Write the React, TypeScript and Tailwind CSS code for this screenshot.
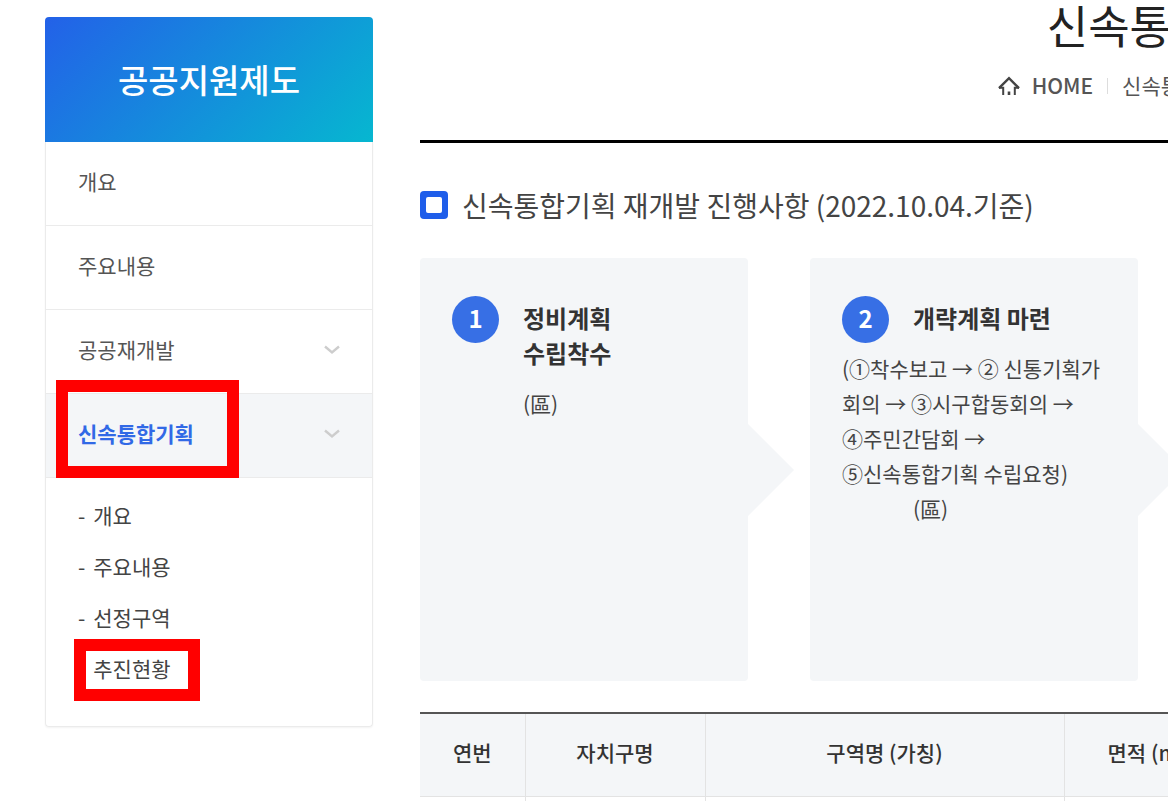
import { ReactNode } from 'react';
import clsx from 'clsx';

interface MenuItem {
  label: string;
  expandable?: boolean;
  active?: boolean;
}

const MENU: MenuItem[] = [
  { label: '개요' },
  { label: '주요내용' },
  { label: '공공재개발', expandable: true },
  { label: '신속통합기획', expandable: true, active: true },
];

const SUB_MENU = ['개요', '주요내용', '선정구역', '추진현황'];

const ChevronIcon = () => (
  <svg className="h-2.5 w-4" viewBox="0 0 16 10" fill="none" stroke="#cdcdcd" strokeWidth="2.4">
    <path d="M1 1.5 8 7.5 15 1.5" />
  </svg>
);

const HomeIcon = () => (
  <svg className="h-5 w-[22px]" viewBox="0 0 22 20" fill="none" stroke="#444" strokeWidth="2">
    <path d="M1 12.2 11 2.2 21 12.2" strokeWidth="2.4" />
    <path d="M1 11.8H5.2V19M21 11.8H16.8V19" />
    <path d="M11 15.5V19" strokeWidth="2.6" />
  </svg>
);

const Sidebar = () => (
  <aside className="mt-[17px] w-[328px] shrink-0">
    <h2 className="flex h-[125px] items-center justify-center rounded-t bg-linear-[135deg] from-[#2361e8] to-[#06b7d0] text-[33px] font-medium text-white">
      공공지원제도
    </h2>
    <nav className="rounded-b border border-t-0 border-[#ebebeb] shadow-xs">
      <ul>
        {MENU.map(({ label, expandable, active }) => (
          <li key={label} className={clsx('relative border-b border-[#ebebeb]', active && 'bg-[#f4f6f8]')}>
            <a
              href="#"
              className={clsx(
                'flex h-[83px] items-center justify-between pr-8 pb-1 pl-8',
                active ? 'font-bold text-[#3169e6]' : 'text-[#555]'
              )}
            >
              {label}
              {expandable && <ChevronIcon />}
            </a>
            {active && <span className="absolute -top-3.5 left-2.5 h-[98px] w-[183px] border-12 border-[#f00]" />}
          </li>
        ))}
      </ul>
      <ul className="pt-3 pb-8">
        {SUB_MENU.map((label, index) => (
          <li key={label} className="relative">
            <a href="#" className="flex h-[51px] items-center gap-2 pl-8 text-[#444]">
              <span>-</span>
              {label}
            </a>
            {index === SUB_MENU.length - 1 && (
              <span className="absolute -top-1 left-7 h-[62px] w-[126px] border-12 border-[#f00]" />
            )}
          </li>
        ))}
      </ul>
    </nav>
  </aside>
);

interface StepProps {
  no: number;
  title: ReactNode;
  children: ReactNode;
}

const Step = ({ no, title, children }: StepProps) => (
  <li className="flex items-center">
    <div className="h-[423px] w-[328px] rounded bg-[#f4f6f8] px-8 pt-[38px]">
      <div className="flex gap-6">
        <span className="flex size-[47px] shrink-0 items-center justify-center rounded-full bg-[#376fe5] pb-1 text-2xl font-bold text-white">
          {no}
        </span>
        <h4 className="pt-1 text-2xl/[35px] font-bold text-[#333]">{title}</h4>
      </div>
      {children}
    </div>
    <svg className="h-[92px] w-[46px]" viewBox="0 0 46 92" fill="#f4f6f8">
      <path d="M0 0 46 46 0 92Z" />
    </svg>
  </li>
);

const App = () => {
  return (
    <div className="flex h-screen gap-[47px] overflow-hidden bg-white pl-[45px] font-['Noto_Sans_CJK_KR',sans-serif] text-[21px]">
      <Sidebar />
      <main className="min-w-[1502px] flex-1">
        <header className="flex h-[143px] flex-col items-center border-b-3 border-black">
          <h1 className="text-[45px]/[50px] text-[#222]">신속통합기획</h1>
          <nav className="mt-5 flex items-center text-[#555]">
            <a href="#" className="flex items-center gap-3">
              <HomeIcon />
              <span className="font-medium">HOME</span>
            </a>
            <span className="mx-3.5 h-4 w-px bg-[#ddd]" />
            <a href="#">신속통합기획</a>
            <span className="mx-3.5 h-4 w-px bg-[#ddd]" />
            <a href="#">추진현황</a>
          </nav>
        </header>

        <h3 className="mt-10 flex items-center gap-3.5 text-[28px]/[44px] text-[#444]">
          <span className="flex size-7 items-center justify-center rounded bg-[#1f5eea]">
            <span className="size-4 rounded-xs bg-white" />
          </span>
          신속통합기획 재개발 진행사항 (2022.10.04.기준)
        </h3>

        <ol className="mt-[31px] flex gap-4">
          <Step
            no={1}
            title={
              <>
                정비계획
                <br />
                수립착수
              </>
            }
          >
            <p className="mt-4 pl-[71px] leading-[35px] text-[#444]">(區)</p>
          </Step>
          <Step no={2} title="개략계획 마련">
            <p className="mt-2 leading-[35px] whitespace-nowrap text-[#444]">
              (①착수보고 → ② 신통기획가
              <br />
              회의 → ③시구합동회의 →
              <br />
              ④주민간담회 →
              <br />
              ⑤신속통합기획 수립요청)
            </p>
            <p className="pl-[71px] leading-[35px] text-[#444]">(區)</p>
          </Step>
        </ol>

        <table className="mt-[31px] w-full table-fixed border-collapse border-t-2 border-[#555]">
          <thead>
            <tr className="h-[83px] border-b border-[#e3e3e3] bg-[#f4f6f8] text-[#333]">
              <th className="w-[105px] border-r border-[#e3e3e3] pb-1 font-medium">연번</th>
              <th className="w-[180px] border-r border-[#e3e3e3] pb-1 font-medium">자치구명</th>
              <th className="w-[359px] border-r border-[#e3e3e3] pb-1 font-medium">구역명 (가칭)</th>
              <th className="w-[174px] border-r border-[#e3e3e3] pb-1 font-medium">면적 (m²)</th>
              <th />
            </tr>
          </thead>
          <tbody>
            <tr className="h-[83px]">
              <td className="border-r border-[#e3e3e3]" />
              <td className="border-r border-[#e3e3e3]" />
              <td className="border-r border-[#e3e3e3]" />
              <td className="border-r border-[#e3e3e3]" />
              <td />
            </tr>
          </tbody>
        </table>
      </main>
    </div>
  );
};

export default App;
